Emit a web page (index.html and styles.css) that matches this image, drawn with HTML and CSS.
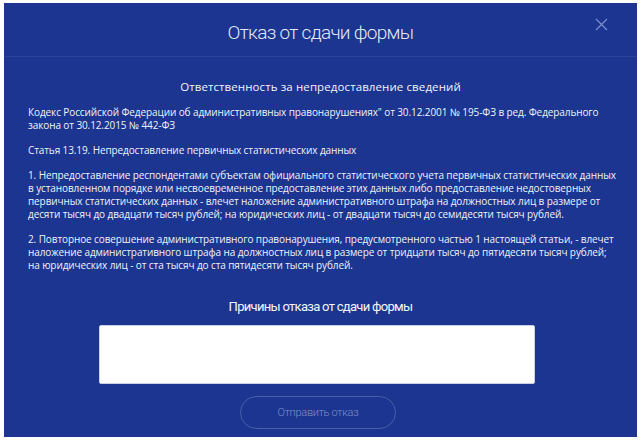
FILE: index.html
```html
<!DOCTYPE html>
<html lang="ru">
<head>
<meta charset="utf-8">
<link rel="stylesheet" href="styles.css">
</head>
<body>
<div class="modal">
  <div class="modal-header">
    <h1 class="modal-title">Отказ от сдачи формы</h1>
    <button class="close" aria-label="Закрыть">
      <svg width="13" height="13" viewBox="0 0 13 13"><path d="M1 1L12 12M12 1L1 12" stroke="#7f91cf" stroke-width="1.1" fill="none"/></svg>
    </button>
  </div>
  <div class="modal-body">
    <h2 class="section-title">Ответственность за непредоставление сведений</h2>
    <p>Кодекс Российской Федерации об административных правонарушениях" от 30.12.2001 № 195-ФЗ в ред. Федерального<br>закона от 30.12.2015 № 442-ФЗ</p>
    <p>Статья 13.19. Непредоставление первичных статистических данных</p>
    <p>1. Непредоставление респондентами субъектам официального статистического учета первичных статистических данных<br>в установленном порядке или несвоевременное предоставление этих данных либо предоставление недостоверных<br>первичных статистических данных - влечет наложение административного штрафа на должностных лиц в размере от<br>десяти тысяч до двадцати тысяч рублей; на юридических лиц - от двадцати тысяч до семидесяти тысяч рублей.</p>
    <p>2. Повторное совершение административного правонарушения, предусмотренного частью 1 настоящей статьи, - влечет<br>наложение административного штрафа на должностных лиц в размере от тридцати тысяч до пятидесяти тысяч рублей;<br>на юридических лиц - от ста тысяч до ста пятидесяти тысяч рублей.</p>
    <h3 class="reasons-title">Причины отказа от сдачи формы</h3>
    <textarea class="reasons"></textarea>
    <button class="submit">Отправить отказ</button>
  </div>
</div>
</body>
</html>
```
FILE: styles.css
```css
html, body {
  margin: 0;
  padding: 0;
  background: #ffffff;
}
.modal {
  margin: 3px 6px 0 4px;
  height: 434px;
  background: #1b3590;
  color: #ffffff;
  display: flex;
  flex-direction: column;
  font-family: "Open Sans", sans-serif;
}
.modal-header {
  height: 53px;
  border-bottom: 1px solid #2a4398;
  display: flex;
  align-items: center;
  justify-content: center;
  position: relative;
}
.modal-title {
  margin: 6px 0 0 0;
  font-family: Roboto, sans-serif;
  font-weight: 300;
  font-size: 19px;
  letter-spacing: -0.7px;
  color: #e4e8f5;
}
.close {
  position: absolute;
  right: 29px;
  top: 15px;
  background: none;
  border: 0;
  padding: 0;
  width: 13px;
  height: 13px;
}
.modal-body {
  padding: 0 0 0 24px;
  display: flex;
  flex-direction: column;
}
.section-title {
  margin: 22px 24px 0 0;
  text-align: center;
  font-size: 11.5px;
  font-weight: 400;
  color: #f2f4fa;
  letter-spacing: 0.1px;
}
.modal-body p {
  margin: 12px 0 0 0;
  white-space: nowrap;
  font-size: 10px;
  line-height: 13px;
  letter-spacing: -0.1px;
  color: #f0f2f8;
}
.reasons-title {
  margin: 27px 24px 0 0;
  text-align: center;
  font-family: Roboto, sans-serif;
  font-size: 13px;
  font-weight: 400;
  letter-spacing: -0.7px;
  color: #f4f5fb;
}
.reasons {
  margin: 11px 0 0 71px;
  width: 436px;
  height: 59px;
  box-sizing: border-box;
  border: 1px solid #c9d0e6;
  border-radius: 2px;
  background: #ffffff;
  resize: none;
}
.submit {
  margin: 12px 0 0 212px;
  width: 156px;
  height: 33px;
  border: 1px solid #4a60aa;
  border-radius: 17px;
  background: transparent;
  color: #7f90c8;
  font-family: Roboto, sans-serif;
  font-weight: 300;
  font-size: 11px;
  letter-spacing: -0.3px;
}
```
